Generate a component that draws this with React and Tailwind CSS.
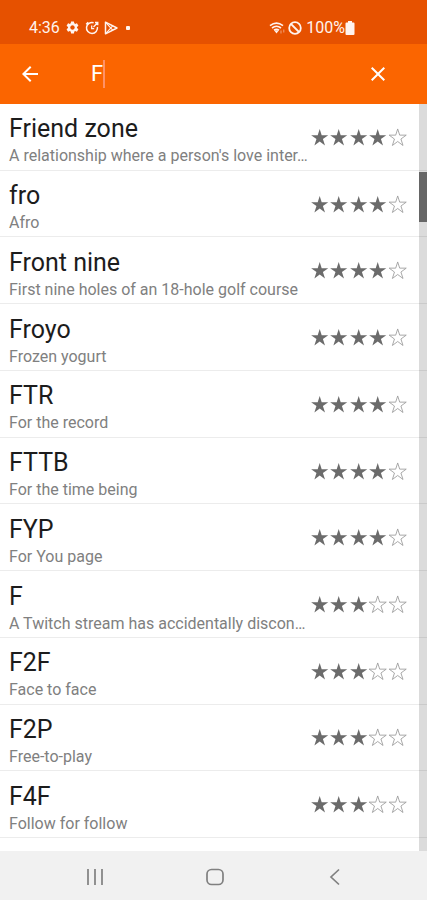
import { useState } from 'react'
import { MdSettings, MdArrowBack, MdClose } from 'react-icons/md'

const entries = [
  { term: 'Friend zone', meaning: "A relationship where a person's love inter…", rating: 4 },
  { term: 'fro', meaning: 'Afro', rating: 4 },
  { term: 'Front nine', meaning: 'First nine holes of an 18-hole golf course', rating: 4 },
  { term: 'Froyo', meaning: 'Frozen yogurt', rating: 4 },
  { term: 'FTR', meaning: 'For the record', rating: 4 },
  { term: 'FTTB', meaning: 'For the time being', rating: 4 },
  { term: 'FYP', meaning: 'For You page', rating: 4 },
  { term: 'F', meaning: 'A Twitch stream has accidentally discon…', rating: 3 },
  { term: 'F2F', meaning: 'Face to face', rating: 3 },
  { term: 'F2P', meaning: 'Free-to-play', rating: 3 },
  { term: 'F4F', meaning: 'Follow for follow', rating: 3 },
]

const STAR = 'M10 1 12.1 7.5H19L13.4 11.6 15.6 18.4 10 14.2 4.4 18.4 6.6 11.6 1 7.5H7.9Z'

const Star = ({ filled }) => (
  <svg viewBox="0 0 20 20" className="h-[19px] w-full" aria-hidden="true">
    <path d={STAR} fill={filled ? '#6b6b6b' : 'none'} stroke={filled ? 'none' : '#9a9a9a'} strokeWidth="0.9" />
  </svg>
)

const StatusBar = () => (
  <div className="h-11 bg-[#e65100] flex items-center justify-between pl-[29px] pr-[72px] pt-[11px] text-[#fff3ee]">
    <div className="flex items-center gap-[5px]">
      <span className="text-base leading-5">4:36</span>
      <MdSettings size={15} />
      {/* alarm dial */}
      <svg viewBox="0 0 14 14" className="size-[14px]" fill="none" stroke="currentColor" strokeWidth="1.5">
        <path d="M8.6 1.7A5.500 5.500 0 1 0 12.400 6M3.200 1.200 1.200 3.200" />
        <path d="M6.700 4.500v3.200h2.500M8.500 6 12.500 1.800M10 1.500h2.800v2.800" strokeWidth="1.3" />
      </svg>
      <svg viewBox="0 0 14 14" className="size-[14px]" fill="none" stroke="currentColor" strokeWidth="1.5" strokeLinejoin="round">
        <path d="M1.500 1.200v11.600L13 7Z" />
        <path d="M1.500 1.200 8.700 9.200M1.500 12.800 8.700 4.800" strokeWidth="1.1" />
      </svg>
      <span className="size-1 rounded-[1px] bg-current ml-[3px]" />
    </div>
    <div className="flex items-center">
      {/* wifi with traffic arrows */}
      <svg viewBox="0 0 17 14" className="w-[17px] h-[14px]" fill="none" stroke="currentColor">
        <path d="M1 4.600Q7.500-.4 14 4.600M3 7Q7.500 3.600 12 7M5 9.200Q7.500 7.400 10 9.200" strokeWidth="1.6" />
        <path d="M5 9.200h5L7.500 12.500Z" fill="currentColor" stroke="none" />
        <path d="M12 12.500v-3M14.800 8.500v3" strokeWidth="1" opacity=".5" />
      </svg>
      <svg viewBox="0 0 14 14" className="size-[14px] ml-[2px]" fill="none" stroke="currentColor" strokeWidth="1.8">
        <circle cx="7" cy="7" r="5.800" />
        <path d="m3 3 8 8" />
      </svg>
      <span className="text-base leading-5 ml-1">100%</span>
      <svg viewBox="0 0 10 14" className="w-[10px] h-[14px]" fill="currentColor">
        <path d="M3 0h4v1.500h1.500a1 1 0 0 1 1 1V13a1 1 0 0 1-1 1h-7a1 1 0 0 1-1-1V2.500a1 1 0 0 1 1-1H3Z" />
      </svg>
    </div>
  </div>
)

const SearchBar = ({ query, onChange }) => (
  <header className="h-[60px] bg-[#fb6500] flex items-center pl-[18px] pr-[37px] text-white">
    <button type="button" aria-label="Back"><MdArrowBack size={24} /></button>
    <div className="flex-1 flex items-center pl-[49px]">
      <input
        type="text"
        aria-label="Search terms"
        value={query}
        onChange={e => onChange(e.target.value)}
        className="field-sizing-content text-[22px] leading-7 bg-transparent outline-none caret-transparent"
      />
      <span className="w-[2px] h-7 bg-[#ff9166]" />
    </div>
    <button type="button" aria-label="Clear search" onClick={() => onChange('')}><MdClose size={24} /></button>
  </header>
)

const EntryRow = ({ term, meaning, rating }) => (
  <li className="flex-1 flex items-center justify-between border-b border-[#ececec] pl-[9px] pr-[20px] pt-px">
    <div className="flex-1 min-w-0 pt-[6px] whitespace-nowrap">
      <p className="text-[25px] leading-8 text-[#1c1c1c]">{term}</p>
      <p className="text-base leading-[22px] text-[#808080]">{meaning}</p>
    </div>
    <div className="w-[97px] shrink-0 grid grid-cols-5" role="img" aria-label={`${rating} out of 5 stars`}>
      {[1, 2, 3, 4, 5].map(n => <Star key={n} filled={n <= rating} />)}
    </div>
  </li>
)

const NavBar = () => (
  <nav className="h-[49px] bg-[#f1f1f1] flex items-center justify-center gap-24 pl-[2px] pt-[2px] text-[#808080]">
    <button type="button" aria-label="Recent apps">
      <svg viewBox="0 0 24 24" className="size-6" fill="none" stroke="currentColor" strokeWidth="1.7">
        <path d="M5 4v16M12 4v16M19 4v16" />
      </svg>
    </button>
    <button type="button" aria-label="Home">
      <svg viewBox="0 0 24 24" className="size-6" fill="none" stroke="currentColor" strokeWidth="1.7">
        <rect x="4" y="4.500" width="16" height="15" rx="4.500" />
      </svg>
    </button>
    <button type="button" aria-label="Go back">
      <svg viewBox="0 0 24 24" className="size-6" fill="none" stroke="currentColor" strokeWidth="1.7">
        <path d="m16 4.500-8 7.500 8 7.500" />
      </svg>
    </button>
  </nav>
)

export default function App() {
  const [query, setQuery] = useState('F')

  return (
    <div className="min-h-screen flex flex-col bg-white font-[Roboto,sans-serif]">
      <StatusBar />
      <SearchBar query={query} onChange={setQuery} />
      <main className="relative flex-1 flex flex-col pb-[13px]">
        <ul className="flex-1 flex flex-col">
          {entries.map(e => <EntryRow key={e.term} {...e} />)}
        </ul>
        {/* Scrollbar */}
        <div className="absolute inset-y-0 right-0 w-2 bg-black/14 pt-[68px]">
          <div className="h-[50px] bg-[#666]" />
        </div>
      </main>
      <NavBar />
    </div>
  )
}
